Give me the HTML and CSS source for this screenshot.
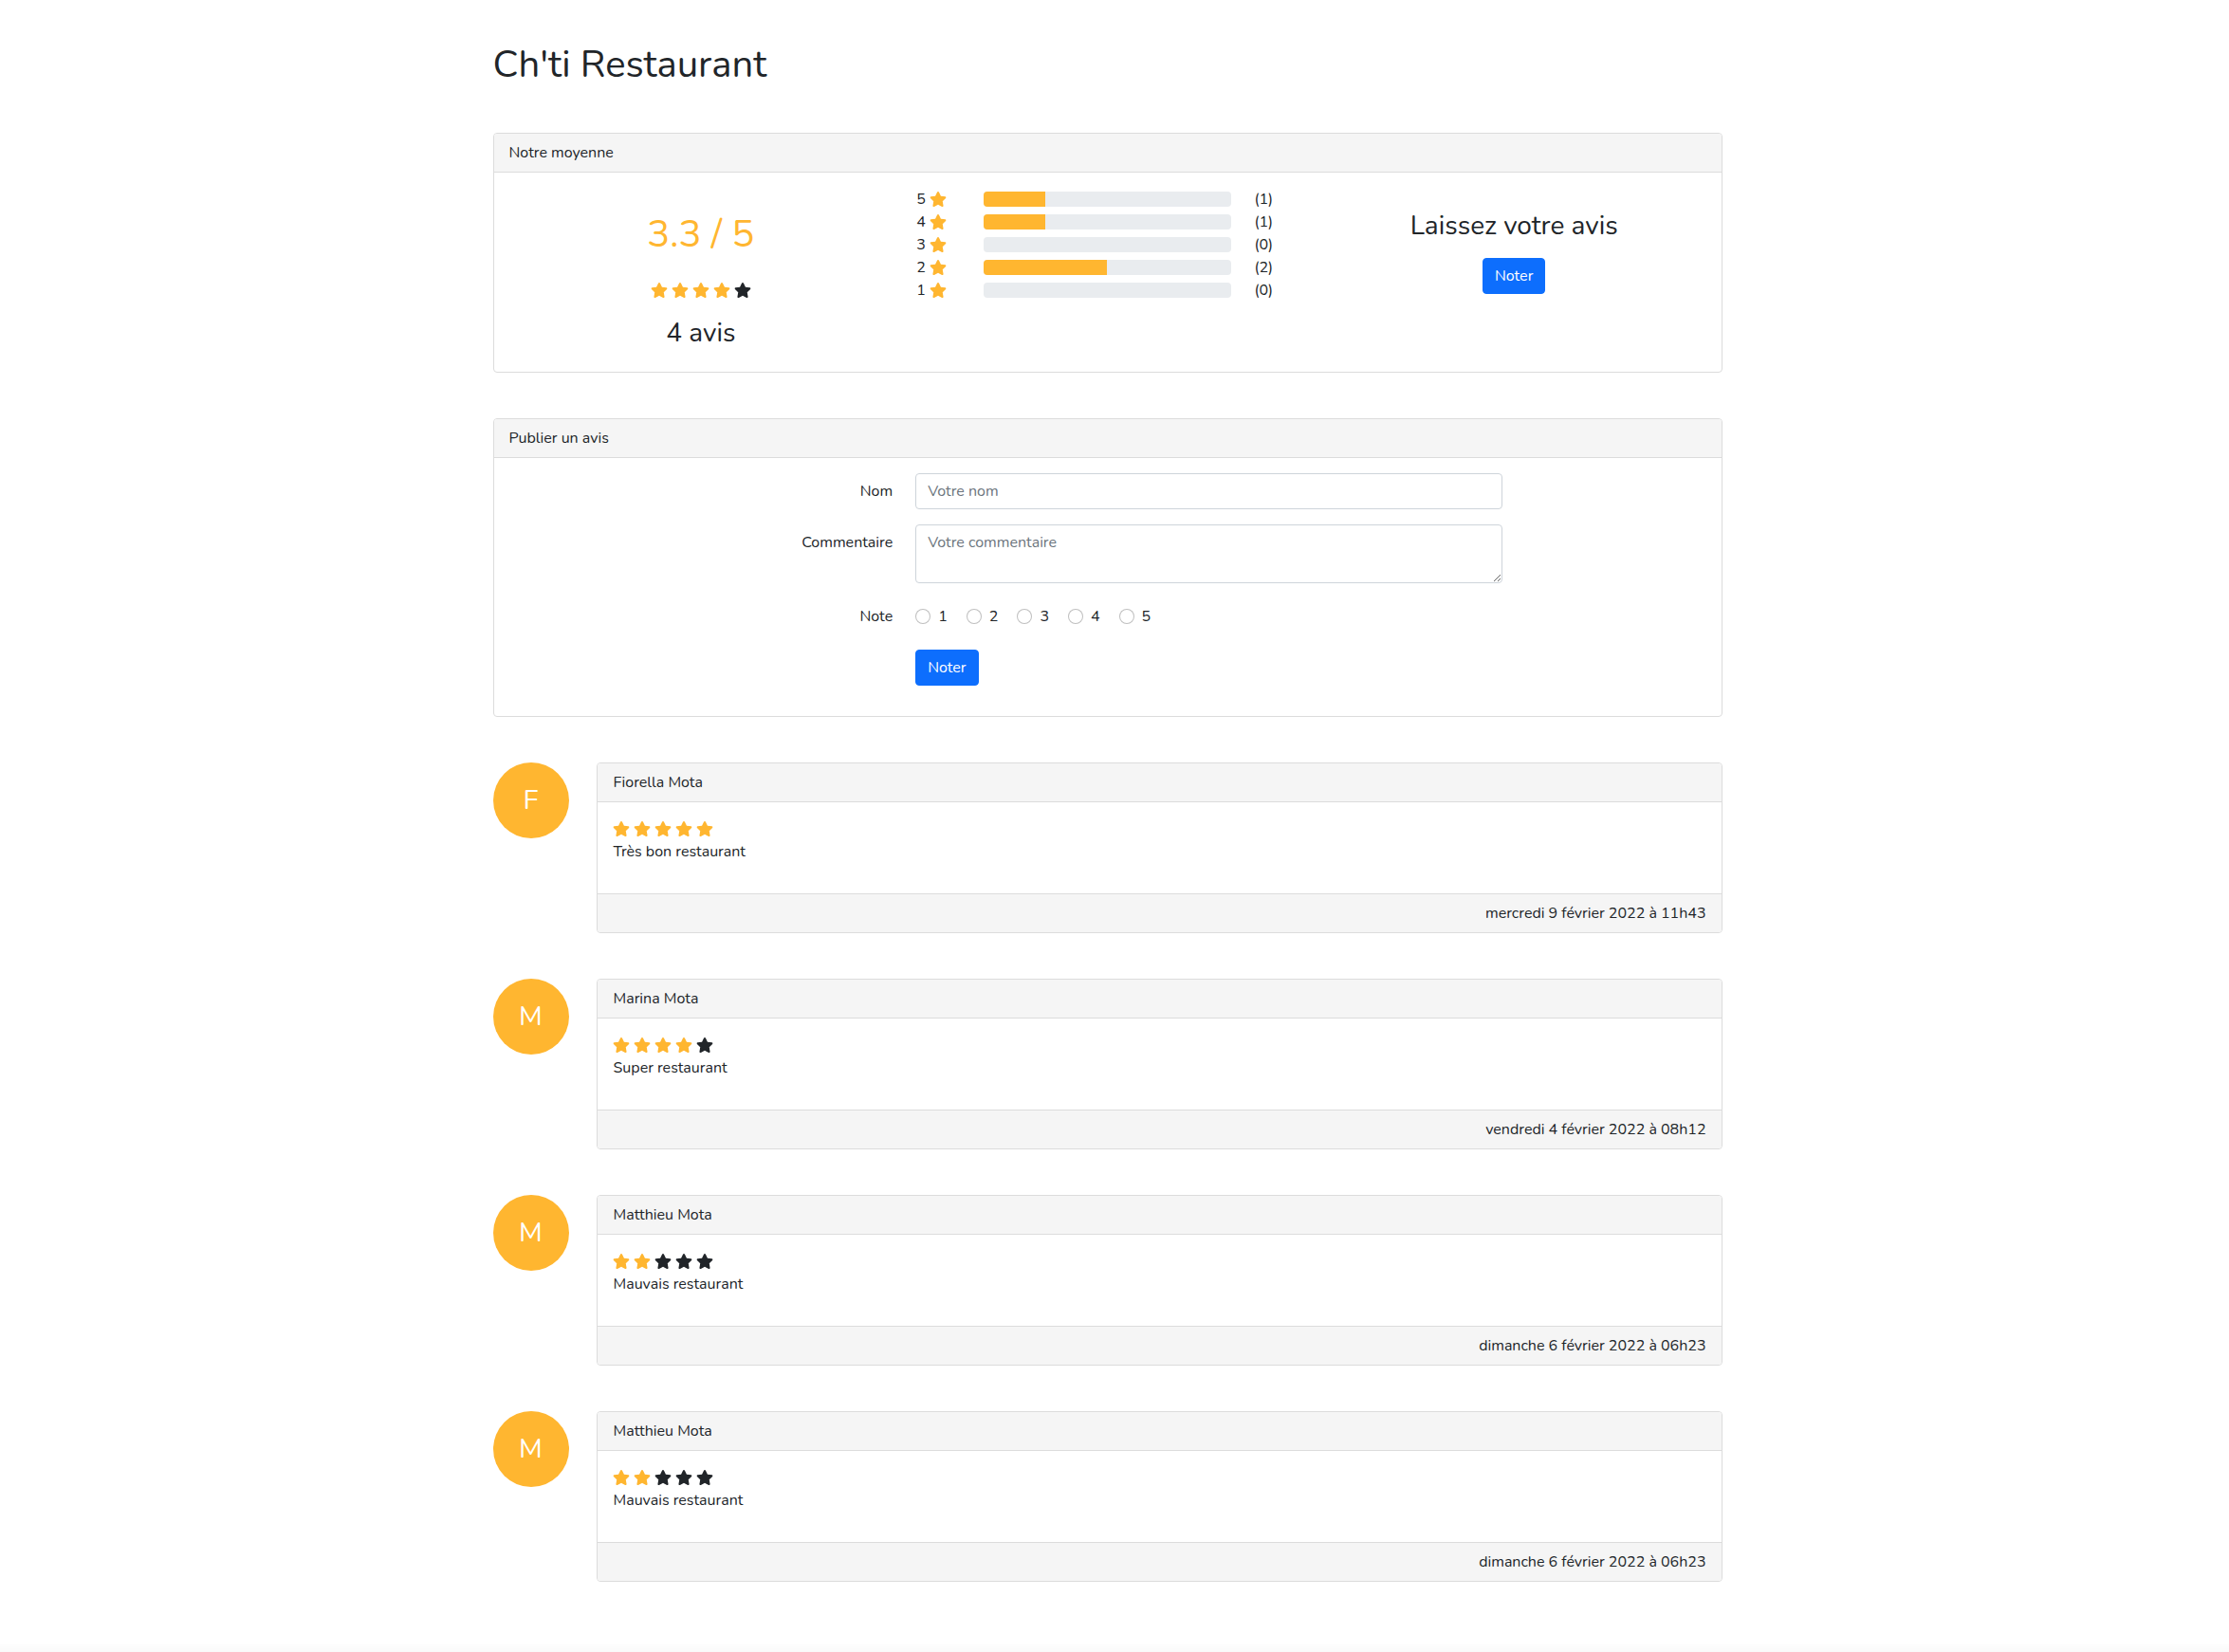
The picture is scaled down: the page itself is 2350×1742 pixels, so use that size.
FILE: index.html
```html
<!DOCTYPE html>
<html lang="fr">
<head>
<meta charset="utf-8">
<title>Ch'ti Restaurant</title>
<link rel="stylesheet" href="styles.css">
</head>
<body>
<svg class="defs" aria-hidden="true"><defs><symbol id="star" viewBox="0 0 576 512"><path d="M259.3 17.8L194 150.2 47.9 171.5c-26.2 3.8-36.7 36.1-17.7 54.6l105.7 103-25 145.5c-4.5 26.3 23.2 46 46.4 33.7L288 439.6l130.7 68.7c23.2 12.2 50.9-7.4 46.4-33.7l-25-145.5 105.7-103c19-18.5 8.5-50.8-17.7-54.6L382 150.2 316.7 17.8c-11.7-23.6-45.6-23.9-57.4 0z"/></symbol></defs></svg>
<main class="container">
  <h1 class="title">Ch'ti Restaurant</h1>

  <section class="card">
    <div class="card-header">Notre moyenne</div>
    <div class="card-body summary">
      <div class="average">
        <div class="average-score">3.3 / 5</div>
        <div class="stars stars-center">
          <svg class="star on"><use href="#star"/></svg>
          <svg class="star on"><use href="#star"/></svg>
          <svg class="star on"><use href="#star"/></svg>
          <svg class="star on"><use href="#star"/></svg>
          <svg class="star off"><use href="#star"/></svg>
        </div>
        <div class="average-count">4 avis</div>
      </div>
      <div class="distribution">
        <div class="dist-row">
          <span class="dist-label">5 <svg class="star on"><use href="#star"/></svg></span>
          <div class="progress"><div class="progress-bar" style="width:25%"></div></div>
          <span class="dist-count">(1)</span>
        </div>
        <div class="dist-row">
          <span class="dist-label">4 <svg class="star on"><use href="#star"/></svg></span>
          <div class="progress"><div class="progress-bar" style="width:25%"></div></div>
          <span class="dist-count">(1)</span>
        </div>
        <div class="dist-row">
          <span class="dist-label">3 <svg class="star on"><use href="#star"/></svg></span>
          <div class="progress"><div class="progress-bar" style="width:0%"></div></div>
          <span class="dist-count">(0)</span>
        </div>
        <div class="dist-row">
          <span class="dist-label">2 <svg class="star on"><use href="#star"/></svg></span>
          <div class="progress"><div class="progress-bar" style="width:50%"></div></div>
          <span class="dist-count">(2)</span>
        </div>
        <div class="dist-row">
          <span class="dist-label">1 <svg class="star on"><use href="#star"/></svg></span>
          <div class="progress"><div class="progress-bar" style="width:0%"></div></div>
          <span class="dist-count">(0)</span>
        </div>
      </div>
      <div class="cta">
        <div class="cta-title">Laissez votre avis</div>
        <button class="btn" type="button">Noter</button>
      </div>
    </div>
  </section>

  <section class="card">
    <div class="card-header">Publier un avis</div>
    <form class="card-body review-form">
      <label class="form-label" for="nom">Nom</label>
      <input class="form-control" id="nom" type="text" placeholder="Votre nom">
      <label class="form-label" for="commentaire">Commentaire</label>
      <textarea class="form-control textarea" id="commentaire" placeholder="Votre commentaire"></textarea>
      <span class="form-label">Note</span>
      <div class="radios">
        <label class="radio"><input type="radio" name="note" value="1"><span>1</span></label>
        <label class="radio"><input type="radio" name="note" value="2"><span>2</span></label>
        <label class="radio"><input type="radio" name="note" value="3"><span>3</span></label>
        <label class="radio"><input type="radio" name="note" value="4"><span>4</span></label>
        <label class="radio"><input type="radio" name="note" value="5"><span>5</span></label>
      </div>
      <button class="btn btn-form" type="button">Noter</button>
    </form>
  </section>

  <article class="review">
    <div class="avatar">F</div>
    <div class="card review-card">
      <div class="card-header">Fiorella Mota</div>
      <div class="card-body">
        <div class="stars">
          <svg class="star on"><use href="#star"/></svg>
          <svg class="star on"><use href="#star"/></svg>
          <svg class="star on"><use href="#star"/></svg>
          <svg class="star on"><use href="#star"/></svg>
          <svg class="star on"><use href="#star"/></svg>
        </div>
        <p class="review-text">Très bon restaurant</p>
      </div>
      <div class="card-footer">mercredi 9 février 2022 à 11h43</div>
    </div>
  </article>

  <article class="review">
    <div class="avatar">M</div>
    <div class="card review-card">
      <div class="card-header">Marina Mota</div>
      <div class="card-body">
        <div class="stars">
          <svg class="star on"><use href="#star"/></svg>
          <svg class="star on"><use href="#star"/></svg>
          <svg class="star on"><use href="#star"/></svg>
          <svg class="star on"><use href="#star"/></svg>
          <svg class="star off"><use href="#star"/></svg>
        </div>
        <p class="review-text">Super restaurant</p>
      </div>
      <div class="card-footer">vendredi 4 février 2022 à 08h12</div>
    </div>
  </article>

  <article class="review">
    <div class="avatar">M</div>
    <div class="card review-card">
      <div class="card-header">Matthieu Mota</div>
      <div class="card-body">
        <div class="stars">
          <svg class="star on"><use href="#star"/></svg>
          <svg class="star on"><use href="#star"/></svg>
          <svg class="star off"><use href="#star"/></svg>
          <svg class="star off"><use href="#star"/></svg>
          <svg class="star off"><use href="#star"/></svg>
        </div>
        <p class="review-text">Mauvais restaurant</p>
      </div>
      <div class="card-footer">dimanche 6 février 2022 à 06h23</div>
    </div>
  </article>

  <article class="review">
    <div class="avatar">M</div>
    <div class="card review-card">
      <div class="card-header">Matthieu Mota</div>
      <div class="card-body">
        <div class="stars">
          <svg class="star on"><use href="#star"/></svg>
          <svg class="star on"><use href="#star"/></svg>
          <svg class="star off"><use href="#star"/></svg>
          <svg class="star off"><use href="#star"/></svg>
          <svg class="star off"><use href="#star"/></svg>
        </div>
        <p class="review-text">Mauvais restaurant</p>
      </div>
      <div class="card-footer">dimanche 6 février 2022 à 06h23</div>
    </div>
  </article>
</main>
</body>
</html>
```

FILE: styles.css
```css
* {
  box-sizing: border-box;
}

html,
body {
  margin: 0;
}

body {
  padding-right: 15px;
  font-family: Nunito, Lato, "Noto Sans", sans-serif;
  font-size: 16px;
  line-height: 1.5;
  color: #212529;
  background: #fff;
}

body::after {
  content: "";
  position: fixed;
  left: 0;
  right: 0;
  bottom: 0;
  height: 10px;
  background: linear-gradient(rgba(0, 0, 0, 0), rgba(0, 0, 0, 0.025));
  pointer-events: none;
}

.defs {
  position: absolute;
  width: 0;
  height: 0;
  overflow: hidden;
}

.container {
  max-width: 1320px;
  margin: 0 auto;
  padding: 44px 12px 0;
}

.title {
  margin: 0 0 48px;
  font-size: 40px;
  line-height: 48px;
  font-weight: 400;
}

/* Cards */
.card {
  border: 1px solid #dcdcdc;
  border-radius: 4px;
  background: #fff;
  margin-bottom: 48px;
  overflow: hidden;
}

.card-header {
  padding: 8px 16px;
  background: #f5f5f5;
  border-bottom: 1px solid #dcdcdc;
}

.card-body {
  padding: 16px;
}

.card-footer {
  padding: 8px 16px;
  background: #f5f5f5;
  border-top: 1px solid #dcdcdc;
  text-align: right;
}

/* Stars */
.stars {
  display: flex;
  align-items: center;
  gap: 4px;
  height: 24px;
}

.star {
  display: block;
  flex: none;
  width: 18px;
  height: 16px;
}

.star.on {
  fill: #ffb630;
}

.star.off {
  fill: #212529;
}

/* Summary */
.summary {
  display: grid;
  grid-template-columns: repeat(3, 1fr);
  column-gap: 24px;
}

.average {
  text-align: center;
  padding-top: 24.5px;
}

.average-score {
  font-size: 40px;
  line-height: 48px;
  color: #ffb630;
}

.stars-center {
  justify-content: center;
  margin-top: 23.5px;
}

.average-count {
  margin: 17px 0 7.4px;
  font-size: 28px;
  line-height: 33.6px;
}

.distribution {
  display: flex;
  flex-direction: column;
}

.dist-row {
  display: grid;
  grid-template-columns: 47.4px 1fr 47.4px;
  column-gap: 24px;
  align-items: center;
  height: 24px;
}

.dist-label {
  display: flex;
  align-items: center;
  gap: 4px;
  padding-left: 1px;
}

.progress {
  height: 16px;
  background: #e9ecef;
  border-radius: 4px;
  overflow: hidden;
}

.progress-bar {
  height: 100%;
  background: #ffb630;
}

.cta {
  text-align: center;
  padding-top: 24px;
}

.cta-title {
  font-size: 28px;
  line-height: 33.6px;
}

.btn {
  display: inline-block;
  margin-top: 16px;
  padding: 6px 12px;
  font: inherit;
  line-height: 24px;
  color: #fff;
  background: #0d6efd;
  border: 1px solid #0d6efd;
  border-radius: 4px;
}

/* Form */
.review-form {
  display: grid;
  grid-template-columns: calc((100% + 24px) / 3 - 24px) calc((100% + 24px) / 2 - 24px);
  column-gap: 24px;
  row-gap: 16px;
  padding-bottom: 32px;
}

.form-label {
  text-align: right;
  padding-top: 7px;
  line-height: 24px;
}

.form-control {
  display: block;
  width: 100%;
  height: 38px;
  padding: 6px 12px;
  font: inherit;
  line-height: 24px;
  color: #212529;
  background: #fff;
  border: 1px solid #ced4da;
  border-radius: 4px;
}

.form-control::placeholder {
  color: #6c757d;
  opacity: 1;
}

.textarea {
  height: 62px;
  resize: vertical;
}

.radios {
  display: flex;
  align-items: center;
  gap: 20px;
  height: 38px;
}

.radio {
  display: flex;
  align-items: center;
  gap: 8px;
}

.radio input {
  appearance: none;
  -webkit-appearance: none;
  width: 16px;
  height: 16px;
  margin: 0;
  background: #fff;
  border: 1px solid rgba(0, 0, 0, 0.25);
  border-radius: 50%;
}

.btn-form {
  grid-column: 2;
  justify-self: start;
  margin-top: 0;
}

/* Reviews */
.review {
  display: grid;
  grid-template-columns: calc((100% + 24px) / 12 - 24px) 1fr;
  column-gap: 24px;
  align-items: start;
  margin-bottom: 48px;
}

.review .card {
  margin-bottom: 0;
}

.avatar {
  display: flex;
  align-items: center;
  justify-content: center;
  width: 80px;
  height: 80px;
  border-radius: 50%;
  background: #ffb630;
  color: #fff;
  font-size: 29px;
  line-height: 1;
}

.review-text {
  margin: 0 0 16px;
}
```
